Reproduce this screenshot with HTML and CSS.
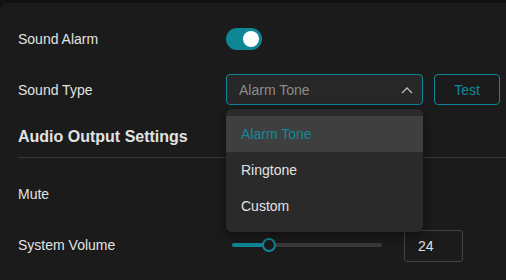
FILE: index.html
```html
<!DOCTYPE html>
<html lang="en">
<head>
  <meta charset="UTF-8">
  <meta name="viewport" content="width=device-width, initial-scale=1.0">
  <title>Alarm Settings</title>
  <link rel="stylesheet" href="styles.css">
</head>
<body>
  <div class="settings-card">
    <div class="setting-row">
      <div class="setting-label">Sound Alarm</div>
      <div class="toggle on"><span class="knob"></span></div>
    </div>

    <div class="setting-row">
      <div class="setting-label">Sound Type</div>
      <div class="select-wrap">
        <div class="select open">
          <span class="select-value">Alarm Tone</span>
          <svg class="chevron" width="12" height="8" viewBox="0 0 12 8">
            <path d="M1 7 L6 2 L11 7" fill="none" stroke="#b8b8b8" stroke-width="1.4"/>
          </svg>
        </div>
        <!-- open dropdown menu -->
        <ul class="dropdown">
          <li class="option active">Alarm Tone</li>
          <li class="option">Ringtone</li>
          <li class="option">Custom</li>
        </ul>
      </div>
      <button class="test-btn">Test</button>
    </div>

    <div class="section-title">Audio Output Settings</div>

    <div class="setting-row mute-row">
      <div class="setting-label">Mute</div>
      <div class="toggle"><span class="knob"></span></div>
    </div>

    <div class="setting-row">
      <div class="setting-label">System Volume</div>
      <div class="slider">
        <div class="slider-track"></div>
        <div class="slider-fill" style="width: 24%"></div>
        <div class="slider-thumb" style="left: 24%"></div>
      </div>
      <div class="number-box">24</div>
    </div>
  </div>
</body>
</html>
```

FILE: styles.css
```css
body {
  margin: 0;
  padding: 0;
  background: #121212;
  font-family: "Liberation Sans", Arial, sans-serif;
  font-size: 14px;
  color: #e2e2e2;
  overflow: hidden;
}
.settings-card {
  margin-top: 3px;
  padding: 10px 0 20px 18px;
  background: #1b1b1b;
  border-radius: 8px 0 0 0;
}
.setting-row {
  display: flex;
  align-items: center;
  height: 51px;
}
.setting-label {
  width: 208px;
  flex-shrink: 0;
}

/* toggle switch */
.toggle {
  position: relative;
  width: 36px;
  height: 22px;
  border-radius: 11px;
  background: #4a4a4a;
}
.toggle.on { background: #0f8696; }
.toggle .knob {
  position: absolute;
  top: 3px;
  left: 3px;
  width: 16px;
  height: 16px;
  border-radius: 50%;
  background: #fff;
}
.toggle.on .knob { left: 17px; }

/* select */
.select-wrap { position: relative; }
.select {
  box-sizing: border-box;
  width: 197px;
  height: 31px;
  display: flex;
  align-items: center;
  justify-content: space-between;
  padding: 0 9px 0 12px;
  background: #272727;
  border: 1px solid #0f8696;
  border-radius: 4px;
}
.select-value { color: #8c8c8c; }
.dropdown {
  position: absolute;
  top: 35px;
  left: 0;
  z-index: 5;
  box-sizing: border-box;
  width: 197px;
  margin: 0;
  padding: 7px 0 8px 0;
  list-style: none;
  background: #2a2a2a;
  border-radius: 6px;
  box-shadow: 0 4px 12px rgba(0, 0, 0, 0.45);
}
.option {
  height: 36px;
  line-height: 36px;
  padding-left: 15px;
  color: #e2e2e2;
}
.option.active {
  background: #3f3f3f;
  color: #12899a;
}
.test-btn {
  box-sizing: border-box;
  width: 66px;
  height: 31px;
  margin-left: 11px;
  background: transparent;
  border: 1px solid #0f8696;
  border-radius: 4px;
  color: #12899a;
  font-family: inherit;
  font-size: 14px;
}

.section-title {
  margin-top: 12px;
  padding-bottom: 10px;
  border-bottom: 1px solid #383838;
  font-size: 16px;
  font-weight: bold;
  line-height: 20px;
}
.mute-row { margin-top: 10px; }

/* slider */
.slider {
  position: relative;
  width: 150px;
  height: 14px;
  margin-left: 6px;
}
.slider-track,
.slider-fill {
  position: absolute;
  top: 5px;
  left: 0;
  height: 4px;
  border-radius: 2px;
}
.slider-track { width: 100%; background: #3a3a3a; }
.slider-fill { background: #0f8696; }
.slider-thumb {
  position: absolute;
  top: 0;
  box-sizing: border-box;
  width: 14px;
  height: 14px;
  margin-left: -6px;
  border-radius: 50%;
  border: 2px solid #0f8696;
  background: #1b1b1b;
}
.number-box {
  box-sizing: border-box;
  width: 59px;
  height: 32px;
  margin-left: 22px;
  padding-left: 13px;
  line-height: 30px;
  border: 1px solid #444;
  border-radius: 3px;
  margin-top: 2px;
}
```
